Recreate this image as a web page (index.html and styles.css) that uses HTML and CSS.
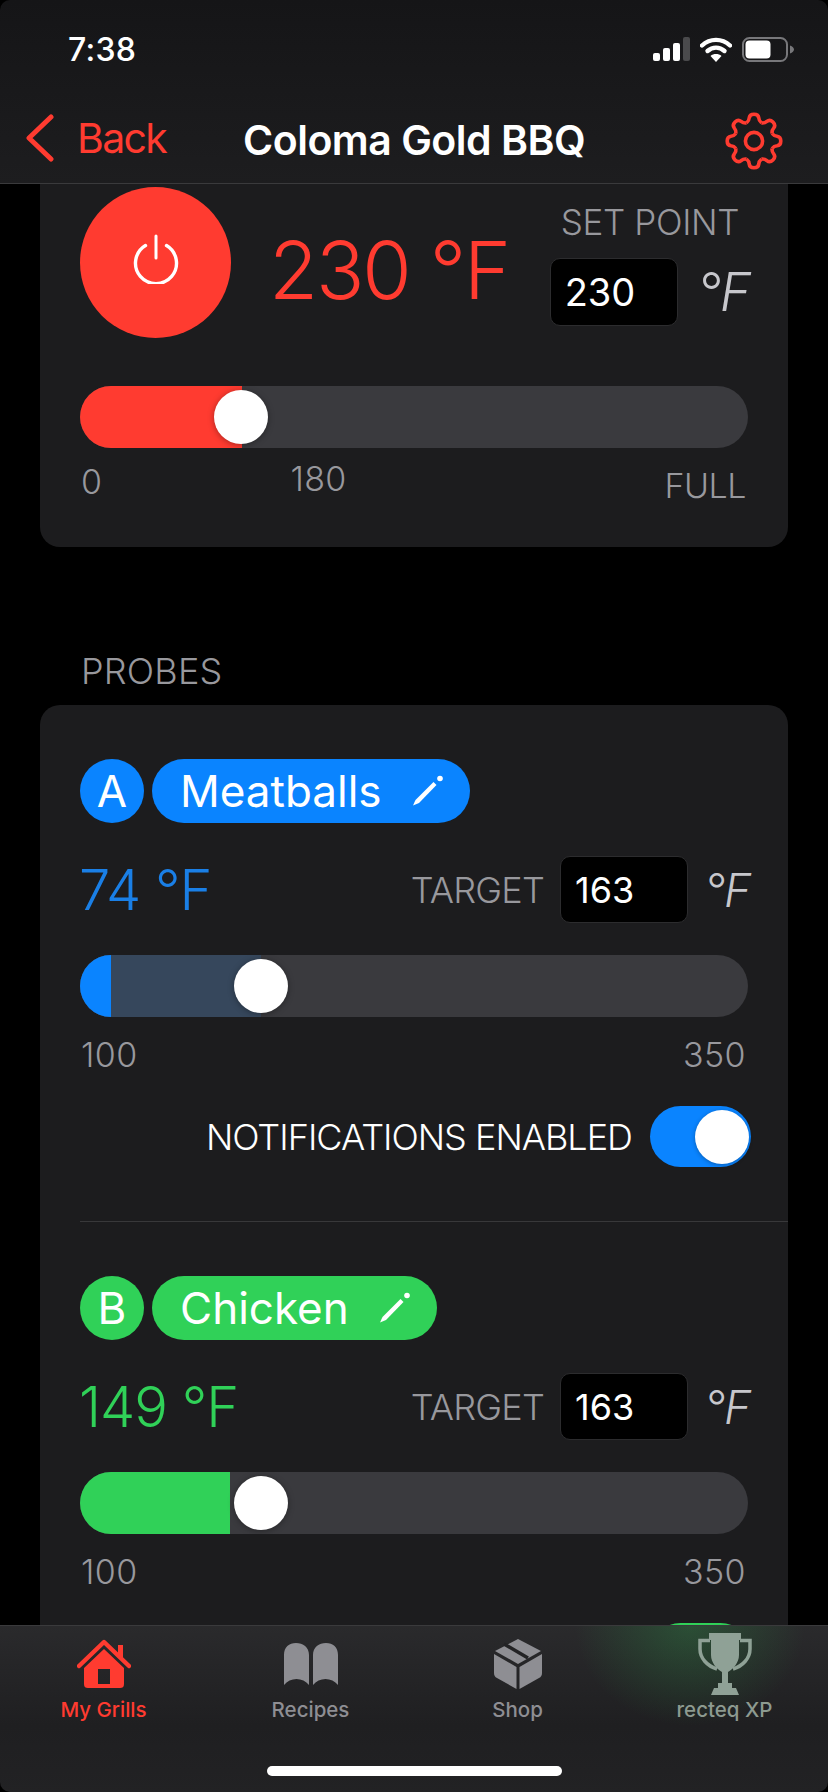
FILE: index.html
```html
<!DOCTYPE html>
<html lang="en">
<head>
    <meta charset="UTF-8">
    <meta name="viewport" content="width=device-width, initial-scale=1.0">
    <title>Coloma Gold BBQ</title>
    <link rel="stylesheet" href="styles.css">
</head>
<body>
    <div class="app">
        <header class="top-bar">
            <div class="status-bar">
                <span class="clock">7:38</span>
                <div class="status-icons">
                    <svg class="signal" width="37" height="24" viewBox="0 0 37 24">
                        <rect x="0" y="16" width="7" height="8" rx="2" fill="#fff"/>
                        <rect x="10" y="11" width="7" height="13" rx="2" fill="#fff"/>
                        <rect x="20" y="6" width="7" height="18" rx="2" fill="#fff"/>
                        <rect x="30" y="0" width="7" height="24" rx="2" fill="#4a4a4c"/>
                    </svg>
                    <svg class="wifi" width="32" height="25" viewBox="0 0 32 25">
                        <path d="M2 8.5C10 1 22 1 30 8.5" fill="none" stroke="#fff" stroke-width="4.4" stroke-linecap="round"/>
                        <path d="M7.5 14C12.5 9.5 19.5 9.5 24.5 14" fill="none" stroke="#fff" stroke-width="4.4" stroke-linecap="round"/>
                        <path d="M16 25L10.5 19C13.5 16.4 18.5 16.4 21.5 19Z" fill="#fff"/>
                    </svg>
                    <svg class="battery" width="52" height="25" viewBox="0 0 52 25">
                        <rect x="1" y="1" width="44" height="23" rx="6.5" fill="none" stroke="#77777a" stroke-width="2"/>
                        <rect x="3.5" y="3.5" width="25" height="18" rx="4" fill="#fff"/>
                        <path d="M48 8.5C50.5 9.5 52 11 52 12.5C52 14 50.5 15.5 48 16.5Z" fill="#77777a"/>
                    </svg>
                </div>
            </div>
            <nav class="nav-bar">
                <a class="back">
                    <svg width="30" height="48" viewBox="0 0 30 48">
                        <path d="M26 3L4 24L26 45" fill="none" stroke="#ff3b30" stroke-width="5" stroke-linecap="round" stroke-linejoin="round"/>
                    </svg>
                    <span>Back</span>
                </a>
                <h1 class="title">Coloma Gold BBQ</h1>
                <svg class="gear" width="58" height="58" viewBox="-29 -29 58 58">
                    <g fill="none" stroke="#ff3b30" stroke-width="3.6" stroke-linejoin="round">
                        <circle r="8.6"/>
                        <path id="tooth" d="M-7.5 -18.1Q-5 -20 -4.8 -23Q-4.4 -26.8 0 -26.8Q4.4 -26.8 4.8 -23Q5 -20 7.5 -18.1"/>
                        <use href="#tooth" transform="rotate(45)"/>
                        <use href="#tooth" transform="rotate(90)"/>
                        <use href="#tooth" transform="rotate(135)"/>
                        <use href="#tooth" transform="rotate(180)"/>
                        <use href="#tooth" transform="rotate(225)"/>
                        <use href="#tooth" transform="rotate(270)"/>
                        <use href="#tooth" transform="rotate(315)"/>
                    </g>
                </svg>
            </nav>
        </header>

        <main class="scroll">
            <section class="card grill-card">
                <div class="grill-top">
                    <button class="power">
                        <svg width="46" height="50" viewBox="0 0 46 50">
                            <path d="M23 2V24" fill="none" stroke="#fff" stroke-width="3" stroke-linecap="round"/>
                            <path d="M12.5 11.5A20.5 20.5 0 1 0 33.5 11.5" fill="none" stroke="#fff" stroke-width="3.4" stroke-linecap="round"/>
                        </svg>
                    </button>
                    <div class="grill-temp">230 °F</div>
                    <div class="set-point">
                        <div class="set-label">SET POINT</div>
                        <div class="input-row">
                            <div class="num-input">230</div>
                            <span class="unit">°F</span>
                        </div>
                    </div>
                </div>
                <div class="slider">
                    <div class="fill red" style="width: 162px"></div>
                    <div class="thumb" style="left: 134px"></div>
                </div>
                <div class="scale grill-scale">
                    <span class="s-zero">0</span>
                    <span class="s-mid">180</span>
                    <span class="s-full">FULL</span>
                </div>
            </section>

            <div class="section-label">PROBES</div>

            <section class="card probes-card">
                <div class="probe">
                    <div class="probe-name">
                        <span class="badge blue">A</span>
                        <span class="pill blue">
                            Meatballs
                            <svg width="32" height="32" viewBox="0 0 32 32">
                                <path d="M1 30.5L3.5 25L21.5 7L24.5 10L7 28Z" fill="#fff"/>
                                <circle cx="28" cy="3.5" r="2.8" fill="#fff"/>
                            </svg>
                        </span>
                    </div>
                    <div class="probe-row">
                        <div class="probe-temp t-blue">74 °F</div>
                        <div class="target">
                            <span class="target-label">TARGET</span>
                            <div class="num-input">163</div>
                            <span class="unit">°F</span>
                        </div>
                    </div>
                    <div class="slider probe-slider">
                        <div class="fill ghost-blue" style="width: 181px"></div>
                        <div class="fill blue" style="width: 31px"></div>
                        <div class="thumb" style="left: 154px"></div>
                    </div>
                    <div class="scale">
                        <span>100</span>
                        <span>350</span>
                    </div>
                    <div class="notify">
                        <span>NOTIFICATIONS ENABLED</span>
                        <div class="toggle blue"><div class="knob"></div></div>
                    </div>
                </div>

                <div class="probe">
                    <div class="probe-name">
                        <span class="badge green">B</span>
                        <span class="pill green">
                            Chicken
                            <svg width="32" height="32" viewBox="0 0 32 32">
                                <path d="M1 30.5L3.5 25L21.5 7L24.5 10L7 28Z" fill="#fff"/>
                                <circle cx="28" cy="3.5" r="2.8" fill="#fff"/>
                            </svg>
                        </span>
                    </div>
                    <div class="probe-row">
                        <div class="probe-temp t-green">149 °F</div>
                        <div class="target">
                            <span class="target-label">TARGET</span>
                            <div class="num-input">163</div>
                            <span class="unit">°F</span>
                        </div>
                    </div>
                    <div class="slider probe-slider">
                        <div class="fill green" style="width: 150px"></div>
                        <div class="thumb" style="left: 154px"></div>
                    </div>
                    <div class="scale">
                        <span>100</span>
                        <span>350</span>
                    </div>
                    <div class="notify">
                        <div class="toggle green"><div class="knob"></div></div>
                    </div>
                </div>
            </section>
        </main>

        <footer class="tab-bar">
            <div class="tabs">
                <a class="tab active">
                    <div class="tab-icon">
                        <svg width="54" height="50" viewBox="0 0 54 50">
                            <path d="M2 27L27 3L52 27" fill="none" stroke="#ff3b30" stroke-width="4.5" stroke-linecap="round" stroke-linejoin="round"/>
                            <path d="M41 6H46V20L41 15Z" fill="#ff3b30"/>
                            <path fill-rule="evenodd" d="M27 10L47 29V45C47 48 45.5 49 43 49H11C8.5 49 7 48 7 45V29ZM21 30V45H33V30Z" fill="#ff3b30"/>
                        </svg>
                    </div>
                    <span>My Grills</span>
                </a>
                <a class="tab">
                    <div class="tab-icon">
                        <svg width="54" height="44" viewBox="0 0 54 44">
                            <path d="M0 43V13C0 5 5 1 12 1C19 1 25 5 25 13V43C19 35 6 35 0 43Z" fill="#8e8e93"/>
                            <path d="M54 43V13C54 5 49 1 42 1C35 1 29 5 29 13V43C35 35 48 35 54 43Z" fill="#8e8e93"/>
                        </svg>
                    </div>
                    <span>Recipes</span>
                </a>
                <a class="tab">
                    <div class="tab-icon">
                        <svg width="48" height="50" viewBox="0 0 48 50">
                            <path d="M24 0L47 12L24 25L1 12Z" fill="#8e8e93"/>
                            <path d="M10 5L34 19" fill="none" stroke="#232325" stroke-width="3.5"/>
                            <path d="M0 15L22.5 28V50L3 39C1 38 0 36.5 0 34Z" fill="#8e8e93"/>
                            <path d="M48 15L25.5 28V50L45 39C47 38 48 36.5 48 34Z" fill="#8e8e93"/>
                        </svg>
                    </div>
                    <span>Shop</span>
                </a>
                <a class="tab xp">
                    <div class="tab-icon">
                        <svg width="54" height="62" viewBox="0 0 54 62">
                            <path d="M11 0H43V7H41V22C41 30 35 36 30 39V51H24V39C19 36 13 30 13 22V7H11Z" fill="#8fa196"/>
                            <path d="M12 7.5H2V16C2 25 9 33 19 36" fill="none" stroke="#8fa196" stroke-width="3.5"/>
                            <path d="M42 7.5H52V16C52 25 45 33 35 36" fill="none" stroke="#8fa196" stroke-width="3.5"/>
                            <path d="M20 50H34V55H38L41 62H13L16 55H20Z" fill="#8fa196"/>
                        </svg>
                    </div>
                    <span>recteq XP</span>
                </a>
            </div>
            <div class="home-bar"></div>
        </footer>
    </div>
</body>
</html>
```

FILE: styles.css
```css
* { box-sizing: border-box; }
html, body { margin: 0; padding: 0; }
body {
    background: #000;
    color: #fff;
    font-family: Inter, 'Noto Sans', sans-serif;
    font-weight: 300;
    width: 828px;
    height: 1792px;
    overflow: hidden;
}
.app {
    display: flex;
    flex-direction: column;
    height: 1792px;
    overflow: hidden;
    border-radius: 10px;
    background: #000;
}

/* top */
.top-bar {
    height: 184px;
    flex: none;
    background: linear-gradient(180deg, #151517 0%, #1d1d1f 100%);
    border-bottom: 1px solid #3a3a3c;
}
.status-bar {
    display: flex;
    justify-content: space-between;
    align-items: center;
    height: 50px;
    margin-top: 24px;
    padding: 0 34px 0 68px;
}
.clock { font-size: 32px; font-weight: 500; letter-spacing: 0.3px; }
.status-icons { display: flex; align-items: center; gap: 10px; }
.nav-bar {
    display: flex;
    align-items: center;
    justify-content: space-between;
    padding: 0 45px 0 25px;
    height: 60px;
    margin-top: 34px;
    position: relative;
}
.back { display: flex; align-items: center; gap: 22px; color: #ff3b30; font-size: 41px; font-weight: 400; letter-spacing: -1.7px; }
.title {
    margin: 0;
    font-size: 41px;
    font-weight: 600;
    letter-spacing: -0.5px;
    position: absolute;
    left: 243px;
    top: 7px;
}
.gear { margin-top: 5px; }

/* cards */
.scroll { flex: none; height: 1441px; overflow: hidden; }
.card { margin: 0 40px; background: #1c1c1e; }
.grill-card {
    padding: 3px 40px 0;
    height: 363px;
    border-radius: 0 0 20px 20px;
}
.grill-top { display: flex; align-items: flex-start; }
.power {
    width: 151px;
    height: 151px;
    border: none;
    border-radius: 50%;
    background: #ff3b30;
    display: flex;
    align-items: center;
    justify-content: center;
    padding: 0 0 8px;
    flex: none;
}
.grill-temp {
    font-size: 80px;
    color: #ff3b30;
    margin: 33px 0 0 38px;
    line-height: 100px;
    letter-spacing: -2.2px;
    white-space: nowrap;
}
.set-point { margin-left: auto; margin-right: -2px; padding-top: 14px; }
.set-label { font-size: 35px; line-height: 42px; color: #98989d; margin: 0 0 15px 11px; letter-spacing: -0.35px; white-space: nowrap; }
.input-row { display: flex; align-items: center; gap: 19px; }
.num-input {
    width: 128px;
    height: 68px;
    background: #000;
    border: 1px solid #2c2c2e;
    border-radius: 10px;
    font-size: 38px;
    font-weight: 400;
    line-height: 66px;
    padding-left: 14px;
}
.unit { font-size: 53px; font-style: italic; color: #c7c7cc; letter-spacing: -1px; }

/* slider */
.slider {
    position: relative;
    height: 62px;
    margin-top: 48px;
    background: #3a3a3e;
    border-radius: 31px;
    overflow: hidden;
}
.fill { position: absolute; left: 0; top: 0; bottom: 0; }
.red { background: #ff3b30; }
.blue { background: #0a84ff; }
.green { background: #30d158; }
.ghost-blue { background: #36475c; }
.thumb {
    position: absolute;
    top: 4px;
    width: 54px;
    height: 54px;
    border-radius: 50%;
    background: #fff;
    box-shadow: 0 1px 6px rgba(0,0,0,0.35);
}
.scale {
    display: flex;
    justify-content: space-between;
    font-size: 34px;
    line-height: 38px;
    letter-spacing: 0.4px;
    color: #98989d;
    padding: 0 2px 0 1px;
}
.grill-scale { margin-top: 14px; }
.s-zero { margin-top: 1px; }
.s-mid { margin: -2px auto 0 188px; }
.s-full { margin-top: 5px; letter-spacing: -0.5px; }
.section-label {
    font-size: 36px;
    line-height: 40px;
    color: #98989d;
    margin: 104px 0 14px 81px;
    letter-spacing: 0.2px;
}

/* probes */
.probes-card { border-radius: 20px 20px 0 0; }
.probe {
    margin-left: 40px;
    padding: 54px 40px 54px 0;
    border-bottom: 1px solid #38383a;
}
.probe-name { display: flex; gap: 8px; height: 64px; }
.badge, .pill {
    display: flex;
    align-items: center;
    justify-content: center;
    height: 64px;
    font-size: 44px;
    font-weight: 400;
}
.badge { width: 64px; border-radius: 50%; }
.pill { padding: 0 26px 0 28px; border-radius: 32px; gap: 30px; }
.probe-row { display: flex; align-items: center; justify-content: space-between; margin-top: 33px; height: 67px; }
.probe-temp { font-size: 56px; letter-spacing: -1px; margin-left: -1px; }
.t-blue { color: #1a7fe6; }
.t-green { color: #30d158; }
.target { display: flex; align-items: center; margin-right: -2px; }
.target-label { font-size: 36px; color: #98989d; margin-right: 16px; letter-spacing: -0.8px; }
.target .num-input { height: 67px; margin-right: 16px; font-size: 36px; }
.target .unit { font-size: 46px; }
.probe-slider { margin-top: 32px; }
.probe-slider + .scale { margin-top: 19px; }
.notify {
    display: flex;
    align-items: center;
    justify-content: flex-end;
    gap: 18px;
    margin-top: 32px;
    margin-right: -3px;
    font-size: 36px;
    letter-spacing: -1px;
    white-space: nowrap;
}
.toggle {
    width: 101px;
    height: 61px;
    border-radius: 31px;
    display: flex;
    align-items: center;
    justify-content: flex-end;
    padding-right: 2px;
}
.knob { width: 54px; height: 54px; border-radius: 50%; background: #fff; box-shadow: 0 1px 4px rgba(0,0,0,0.3); }

/* tab bar */
.tab-bar {
    flex: 1;
    border-top: 1px solid #3a3a3c;
    background:
        radial-gradient(ellipse 115px 100px at 690px 0, rgba(48,209,88,0.22), rgba(48,209,88,0)),
        linear-gradient(180deg, #2a2a2c 0%, #1f1f21 60%, #222224 100%);
}
.tabs { display: grid; grid-template-columns: repeat(4, 207px); height: 140px; padding-top: 4px; }
.tab {
    display: flex;
    flex-direction: column;
    align-items: center;
    color: #8e8e93;
    font-size: 20.5px;
    font-weight: 500;
    line-height: 24px;
}
.tab-icon { height: 68px; display: flex; align-items: center; justify-content: center; }
.tab.active { color: #ff3b30; }
.tab.xp { color: #8d9a90; }
.home-bar {
    width: 295px;
    height: 10px;
    margin: 0 auto;
    border-radius: 5px;
    background: #fff;
}
```
